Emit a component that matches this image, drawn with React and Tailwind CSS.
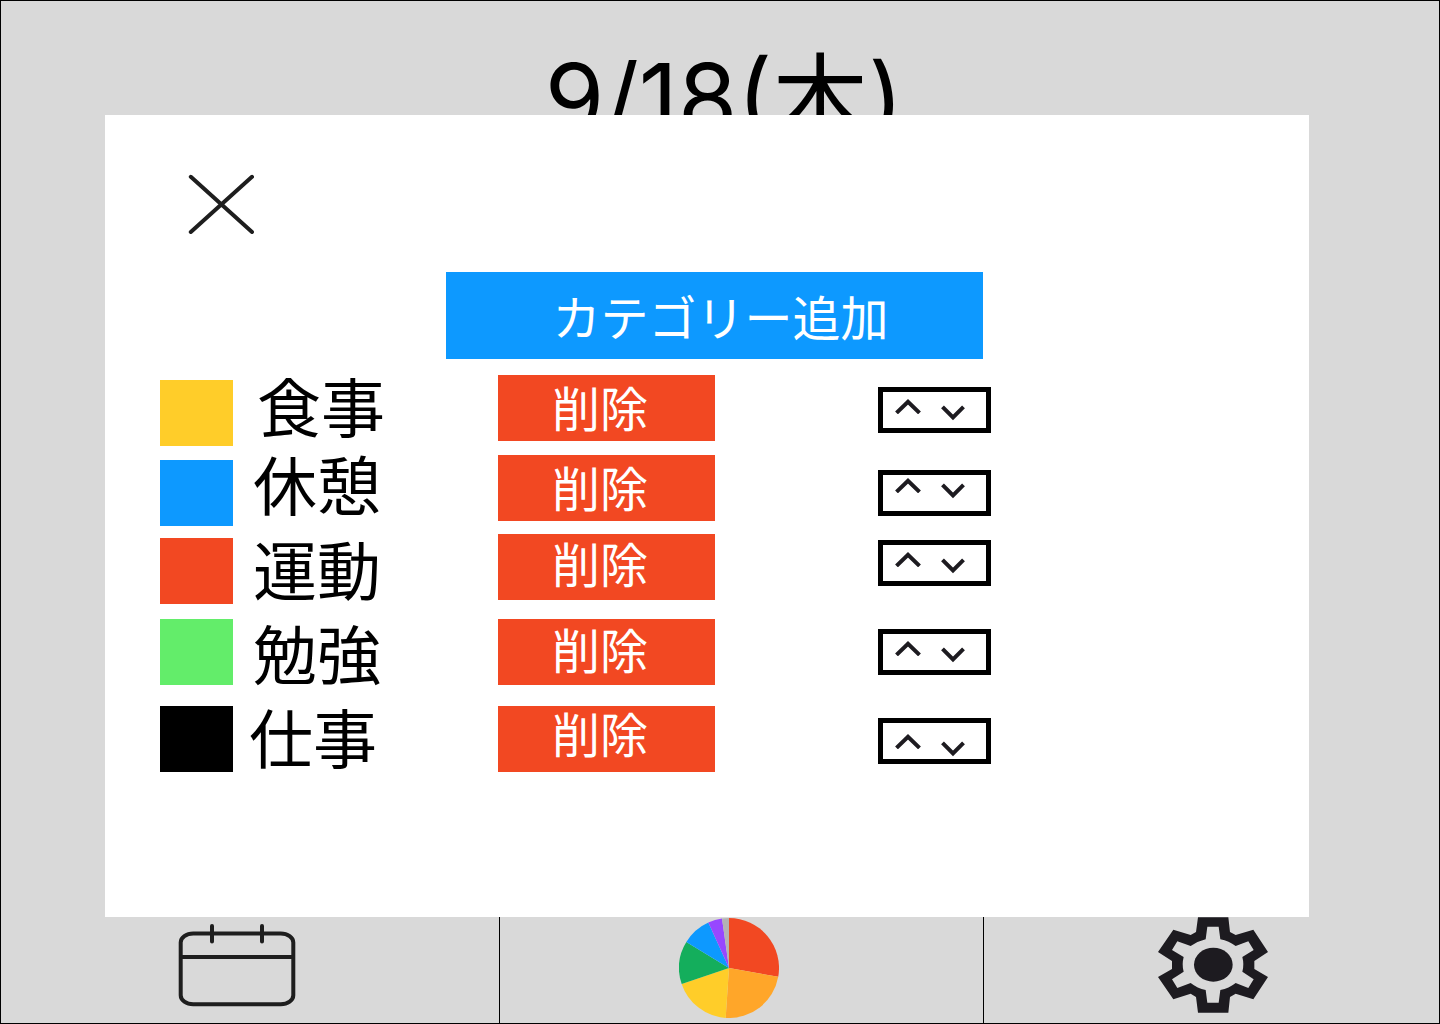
const ROWS = [
  {
    name: "食事",
    swatch: "bg-[#ffcd29] self-end",
    row: "min-h-[71px]",
    label: "self-start pt-0.5 pl-6",
    remove: "self-start pt-1",
    stepper: "self-start mt-3 items-center",
  },
  {
    name: "休憩",
    swatch: "bg-[#0d99ff] self-end",
    row: "mt-[9px] min-h-[71px]",
    label: "self-start pl-5",
    remove: "self-start pt-1",
    stepper: "self-end mb-2.5 items-start",
  },
  {
    name: "運動",
    swatch: "bg-[#f24822] self-end",
    row: "mt-2 min-h-[70px]",
    label: "self-end pl-5",
    remove: "self-start pb-0.5",
    stepper: "self-start mt-1.5 items-center",
  },
  {
    name: "勉強",
    swatch: "bg-[#63ed6a] self-start",
    row: "mt-[15px] min-h-[69px]",
    label: "self-end pl-5",
    remove: "self-start",
    stepper: "self-start mt-2.5 items-center",
  },
  {
    name: "仕事",
    swatch: "bg-black self-start",
    row: "mt-[18px] min-h-[66px]",
    label: "self-start pt-0.5 pl-4",
    remove: "self-start pb-1.5",
    stepper: "self-start mt-3 items-end",
  },
];

function CloseIcon() {
  return (
    <svg width="66" height="60" viewBox="0 0 66 60" fill="none" stroke="#1e1e1e" strokeWidth="4" strokeLinecap="round">
      <path d="M2.8 2.8 64 58M64 2.8 2.8 58" />
    </svg>
  );
}

function UpIcon() {
  return (
    <svg width="26" height="16" viewBox="0 0 26 16" fill="none" stroke="#1d1b20" strokeWidth="4">
      <path d="M1.5 14.9 13 3.7 24.5 14.9" />
    </svg>
  );
}

function DownIcon() {
  return (
    <svg width="24" height="16" viewBox="0 0 24 16" fill="none" stroke="#1d1b20" strokeWidth="4">
      <path d="M1.5 1.8 12 12.3 22.5 1.8" />
    </svg>
  );
}

function CalendarIcon() {
  return (
    <svg width="118" height="85" viewBox="0 0 118 85" fill="none" stroke="#1e1e1e" strokeWidth="4" strokeLinecap="round">
      <rect x="2.7" y="11.6" width="112.6" height="70.6" rx="12.5" ry="9" />
      <path d="M3 35H115M34 4V19.5M84 4V19.5" />
    </svg>
  );
}

function PieIcon() {
  return (
    <svg width="100" height="100" viewBox="57 53.5 300 300">
      <path fill="#f24822" d="M207 203.5V53.5A150 150 0 0 1 354.7 230Z" />
      <path fill="#ffa629" d="M207 203.5 354.7 230A150 150 0 0 1 197 353.2Z" />
      <path fill="#ffcd29" d="M207 203.5 197 353.2A150 150 0 0 1 65 251.5Z" />
      <path fill="#14ae5c" d="M207 203.5 65 251.5A150 150 0 0 1 79 125.5Z" />
      <path fill="#0d99ff" d="M207 203.5 79 125.5A150 150 0 0 1 145 67Z" />
      <path fill="#9747ff" d="M207 203.5 145 67A150 150 0 0 1 186 55Z" />
      <path fill="#b3b3b3" d="M207 203.5 186 55A150 150 0 0 1 207 53.5Z" />
    </svg>
  );
}

function GearIcon() {
  return (
    <svg width="110" height="96" viewBox="54 52 330 288" fill="#1d1b20">
      <path
        fillRule="evenodd"
        d="M174 53H265L270 97 287 106 340 90 384 157 343 184V208L384 232 340 299 287 282 270 292 265 339H174L168 292 152 282 100 299 54 232 96 208V184L54 157 100 90 152 106 168 97ZM202 81 197 119Q172 125 152 139L112 125 96 151 131 172Q125 195 131 216L96 239 112 265 152 250Q172 266 197 271L202 309H236L241 271Q267 266 287 250L325 265 341 239 307 216Q313 195 307 172L341 151 325 125 287 139Q267 124 241 119L236 81Z"
      />
      <ellipse cx="220" cy="195" rx="58" ry="51" />
    </svg>
  );
}

function CategoryRow({ item }) {
  return (
    <li className={`grid grid-cols-[73px_244px_217px_auto] justify-start ${item.row}`}>
      <span className={`h-[66px] ${item.swatch}`} />
      <span className={`text-[64px] leading-[64px] text-black ${item.label}`}>{item.name}</span>
      <button
        type="button"
        aria-label={`${item.name}を削除`}
        className={`ml-[21px] h-[66px] w-[217px] bg-[#f24822] pl-[54px] text-left text-5xl leading-none text-white ${item.remove}`}
      >
        削除
      </button>
      <div className={`ml-[184px] flex h-[46px] w-[113px] gap-5 border-5 border-black pl-3 ${item.stepper}`}>
        <button type="button" aria-label={`${item.name}を上へ`} className="pt-0.5 pb-2.5">
          <UpIcon />
        </button>
        <button type="button" aria-label={`${item.name}を下へ`} className="pt-2 pb-0.5">
          <DownIcon />
        </button>
      </div>
    </li>
  );
}

export default function App() {
  return (
    <div
      lang="ja"
      className="relative flex min-h-screen flex-col border border-black bg-[#d9d9d9] font-['Inter','Noto_Sans_CJK_JP',sans-serif]"
    >
      <header className="pt-[39px] pl-2 text-center">
        <h1 className="text-8xl leading-[116px] text-black">9/18(木)</h1>
      </header>

      <nav className="mt-auto grid h-[116px] grid-cols-[499fr_484fr_455fr]">
        <a href="#calendar" aria-label="カレンダー" className="flex items-end justify-center border-r border-black pr-[26px] pb-4">
          <CalendarIcon />
        </a>
        <a href="#report" aria-label="レポート" className="flex items-end justify-center border-r border-black pr-[26px] pb-[5px]">
          <PieIcon />
        </a>
        <a href="#settings" aria-label="設定" className="flex items-end justify-center pb-2.5 pl-0.5">
          <GearIcon />
        </a>
      </nav>

      <section
        role="dialog"
        aria-label="カテゴリー編集"
        className="absolute top-[114px] right-[130px] bottom-[106px] left-[104px] bg-white pt-[59px] pl-[55px]"
      >
        <button type="button" aria-label="閉じる" className="ml-7 block">
          <CloseIcon />
        </button>
        <button
          type="button"
          className="mt-[38px] ml-[286px] block h-[87px] w-[537px] bg-[#0d99ff] pt-1.5 pl-3 text-5xl leading-none text-white"
        >
          カテゴリー追加
        </button>
        <ul className="mt-4">
          {ROWS.map((item) => (
            <CategoryRow key={item.name} item={item} />
          ))}
        </ul>
      </section>
    </div>
  );
}
